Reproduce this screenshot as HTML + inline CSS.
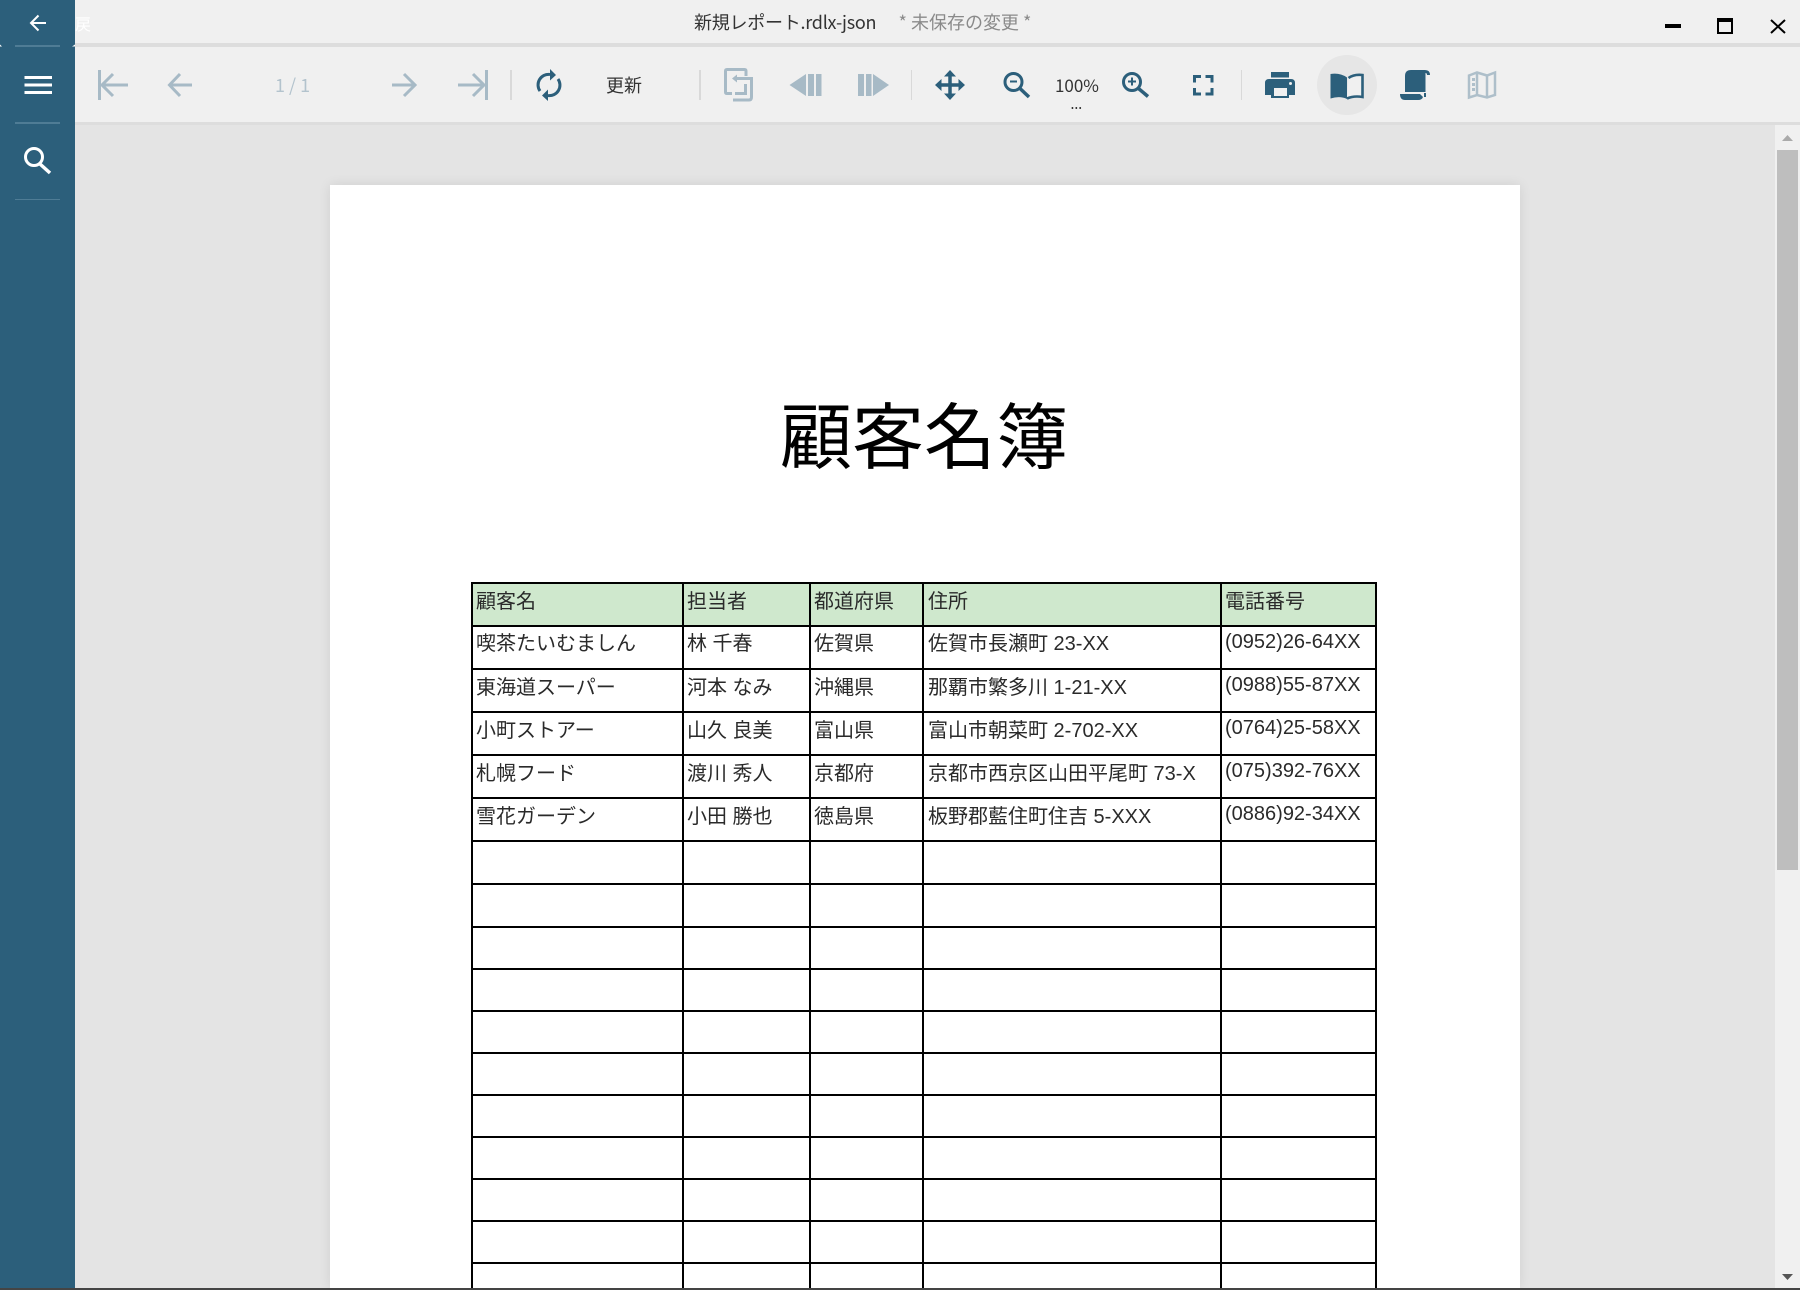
<!DOCTYPE html>
<html lang="ja">
<head>
<meta charset="utf-8">
<title>新規レポート.rdlx-json</title>
<style>
html,body{margin:0;padding:0;width:1800px;height:1290px;overflow:hidden;background:#e4e4e4}
body{position:relative;font-family:"Liberation Sans","Noto Sans CJK JP",sans-serif}
.b{position:absolute}
.t{position:absolute;white-space:nowrap;font-size:20px;line-height:24px;color:#2a2a2a}
.n{font-family:"Noto Sans CJK JP","Liberation Sans",sans-serif}
svg{position:absolute;left:0;top:0}
</style>
</head>
<body>
<div class="b" style="left:0;top:0;width:1800px;height:43px;background:#f0f0f0"></div>
<div class="b" style="left:0;top:43px;width:1800px;height:4px;background:#dddddd"></div>
<div class="b" style="left:0;top:47px;width:1800px;height:75px;background:#f0f0f0"></div>
<div class="b" style="left:0;top:122px;width:1800px;height:3px;background:#dddddd"></div>
<div class="b" style="left:1775px;top:125px;width:25px;height:1163px;background:#f0f0f0"></div>
<div class="b" style="left:1777px;top:150px;width:21px;height:720px;background:#bebebe"></div>
<div class="b" style="left:330px;top:185px;width:1190px;height:1103px;background:#fff;box-shadow:0 0 12px rgba(0,0,0,.09)"></div>

<div class="t n" style="left:75px;top:11px;font-size:16px;color:#fff">戻</div>
<div class="b" style="left:0;top:0;width:75px;height:1288px;background:#2c5f7b"></div>
<div class="b" style="left:0;top:1288px;width:1800px;height:2px;background:#444"></div>

<div class="t n" style="left:694px;top:10px;font-size:18px;letter-spacing:-.25px;color:#333">新規レポート.rdlx-json</div>
<div class="t n" style="left:898.500px;top:10px;font-size:18px;color:#8a8a8a">* 未保存の変更 *</div>
<div class="t n" style="left:275px;top:73px;font-size:18px;color:#b3c3cd">1 / 1</div>
<div class="t n" style="left:606px;top:73px;font-size:18px;color:#333">更新</div>
<div class="t n" style="left:1055px;top:73px;font-size:17px;color:#333">100%</div>
<div class="t n" style="left:1070.500px;top:92px;font-size:14px;color:#222">...</div>

<svg width="1800" height="1290" viewBox="0 0 1800 1290" fill="none">
  <!-- sidebar -->
  <g fill="#4f7c95">
    <rect x="15" y="45" width="45" height="2"/>
    <rect x="15" y="122" width="45" height="2"/>
    <rect x="15" y="199" width="45" height="1"/>
  </g>
  <path d="M0 46.500h2L0 44.500zM75 46.500h-3L75 44.500z" fill="#fff"/>
  <path d="M46 23H32M38.500 15.500L31 23L38.500 30.500" stroke="#fff" stroke-width="2"/>
  <g fill="#fff">
    <rect x="24.500" y="76" width="27.500" height="3"/>
    <rect x="24.500" y="83.500" width="27.500" height="3"/>
    <rect x="24.500" y="91" width="27.500" height="3"/>
  </g>
  <circle cx="34" cy="157" r="8.500" stroke="#fff" stroke-width="3"/>
  <path d="M40 164L50 173" stroke="#fff" stroke-width="3.500"/>

  <!-- nav, disabled -->
  <g stroke="#a7bac6" stroke-width="3">
    <path d="M128 85H103M113 74L102 85L113 96"/>
    <path d="M192 85H171M180 74L169.500 85L180 96"/>
    <path d="M392 85H413M404 74L415 85L404 96"/>
    <path d="M458 85H483M473 74L484 85L473 96"/>
  </g>
  <rect x="98" y="70" width="3" height="30" fill="#a7bac6"/>
  <rect x="485" y="70" width="3" height="30" fill="#a7bac6"/>

  <!-- separators -->
  <g fill="#d9d9d9">
    <rect x="510" y="70" width="2" height="30"/>
    <rect x="699" y="70" width="2" height="30"/>
    <rect x="911" y="70" width="1" height="30"/>
    <rect x="1241" y="70" width="1" height="30"/>
  </g>

  <!-- refresh -->
  <path d="M540 91A10.500 10.500 0 0 1 550 74.500M558 79A10.500 10.500 0 0 1 548 95.500" stroke="#2c5f7b" stroke-width="3"/>
  <path d="M550 69L556 75L550 80.500ZM548 89.500L542 95.500L548 101Z" fill="#2c5f7b"/>

  <!-- copy-ish -->
  <g stroke="#a7bac6" stroke-width="3">
    <path d="M746 76V71Q746 69.500 744.500 69.500H727Q725.500 69.500 725.500 71V92Q725.500 93.500 727 93.500H732"/>
    <path d="M736 78.500H751.500V97Q751.500 100 749 100H733"/>
    <path d="M735 93.500H745.500V84"/>
  </g>
  <path d="M732 78.500L737 74.500V82.500Z" fill="#a7bac6"/>

  <!-- prev/next section -->
  <g fill="#a7bac6">
    <path d="M789.500 85L806 74V96Z"/>
    <rect x="808" y="74" width="6" height="22"/>
    <rect x="816" y="74" width="5.500" height="22"/>
    <rect x="858" y="74" width="6" height="22"/>
    <rect x="866" y="74" width="5.500" height="22"/>
    <path d="M889 85L873 74V96Z"/>
  </g>

  <!-- move -->
  <path d="M950 75V95M940 85H960" stroke="#2c5f7b" stroke-width="3.500"/>
  <path d="M950 70L956 76.500H944ZM950 100L956 93.500H944ZM935 85L941.500 79V91ZM965 85L958.500 79V91Z" fill="#2c5f7b"/>

  <!-- zoom out / in -->
  <g stroke="#2c5f7b">
    <circle cx="1013.500" cy="82" r="8.500" stroke-width="3"/>
    <path d="M1020 88.500L1029 97" stroke-width="3.500"/>
    <path d="M1010 81.500H1017" stroke-width="2"/>
    <circle cx="1132" cy="82" r="8.500" stroke-width="3"/>
    <path d="M1138.500 88.500L1148 96.500" stroke-width="3.500"/>
    <path d="M1128 81.500H1136M1132 77.500V85.500" stroke-width="2"/>
  </g>

  <!-- fit -->
  <path d="M1194.500 82.500V76.500H1201M1205.500 76.500H1212V82.500M1212 88V94H1205.500M1201 94H1194.500V88" stroke="#2c5f7b" stroke-width="3"/>

  <!-- print -->
  <rect x="1271" y="72" width="18" height="5.500" fill="#2c5f7b"/>
  <path d="M1269 79H1291Q1295 79 1295 83V95H1289V98H1271V95H1265V83Q1265 79 1269 79Z" fill="#2c5f7b"/>
  <rect x="1274" y="88" width="13" height="8" fill="#f0f0f0"/>
  <circle cx="1290.500" cy="83.500" r="1.500" fill="#f0f0f0"/>

  <!-- book, active -->
  <circle cx="1347" cy="85" r="30" fill="#e6e6e6"/>
  <path d="M1347 77.500Q1340 72.500 1330.500 74V98.500Q1340 95.500 1347 99Z" fill="#2c5f7b"/>
  <path d="M1348.500 78Q1354 74 1362.500 75V97Q1354 95.500 1347 98.500" stroke="#2c5f7b" stroke-width="2.600" fill="#f0f0f0"/>

  <!-- scroll -->
  <path d="M1405 92V76Q1405 70 1411 70H1425Q1430 70 1430 75H1427Q1427 73 1425.500 73V92Z" fill="#2c5f7b"/>
  <path d="M1400 94H1420L1423 97Q1422 100 1418 100H1405Q1400 100 1400 94Z" fill="#2c5f7b"/>
  <rect x="1424" y="93" width="2" height="4" fill="#2c5f7b"/>

  <!-- map, disabled -->
  <path d="M1469 75.500L1477 72.500L1487 75.500L1495 72.500V95L1487 97.500L1477 95L1469 97.500Z" stroke="#aebfca" stroke-width="2.500"/>
  <path d="M1477 73V95M1487 75V97" stroke="#aebfca" stroke-width="2.500"/>
  <path d="M1472 78h3v3h-3zM1472 83h3v3h-3zM1472 88h3v3h-3z" fill="#aebfca"/>

  <!-- window controls -->
  <rect x="1665" y="24" width="16" height="4" fill="#000"/>
  <rect x="1718" y="19.500" width="14" height="13.500" stroke="#000" stroke-width="2"/>
  <rect x="1717" y="18" width="16" height="4" fill="#000"/>
  <path d="M1771 20L1785 33M1785 20L1771 33" stroke="#000" stroke-width="2"/>

  <!-- scrollbar arrows -->
  <path d="M1782 141L1787.500 135L1793 141Z" fill="#aaa"/>
  <path d="M1782 1274H1793L1787.500 1280Z" fill="#555"/>

  <!-- table -->
  <rect x="472" y="583" width="904" height="42" fill="#cfe8cd"/>
  <g fill="#000" shape-rendering="crispEdges">
    <rect x="471" y="582" width="906" height="2"/>
    <rect x="471" y="625" width="906" height="2"/>
    <rect x="471" y="668" width="906" height="2"/>
    <rect x="471" y="711" width="906" height="2"/>
    <rect x="471" y="754" width="906" height="2"/>
    <rect x="471" y="797" width="906" height="2"/>
    <rect x="471" y="840" width="906" height="2"/>
    <rect x="471" y="883" width="906" height="2"/>
    <rect x="471" y="926" width="906" height="2"/>
    <rect x="471" y="968" width="906" height="2"/>
    <rect x="471" y="1010" width="906" height="2"/>
    <rect x="471" y="1052" width="906" height="2"/>
    <rect x="471" y="1094" width="906" height="2"/>
    <rect x="471" y="1136" width="906" height="2"/>
    <rect x="471" y="1178" width="906" height="2"/>
    <rect x="471" y="1220" width="906" height="2"/>
    <rect x="471" y="1262" width="906" height="2"/>
    <rect x="471" y="582" width="2" height="706"/>
    <rect x="682" y="582" width="2" height="706"/>
    <rect x="809" y="582" width="2" height="706"/>
    <rect x="922" y="582" width="2" height="706"/>
    <rect x="1220" y="582" width="2" height="706"/>
    <rect x="1375" y="582" width="2" height="706"/>
  </g>
</svg>

<div class="t" style="left:780px;top:389px;font-size:72px;line-height:100px;color:#000">顧客名簿</div>

<div class="t" style="left:476px;top:590px">顧客名</div>
<div class="t" style="left:687px;top:590px">担当者</div>
<div class="t" style="left:814px;top:590px">都道府県</div>
<div class="t" style="left:928px;top:590px">住所</div>
<div class="t" style="left:1225px;top:590px">電話番号</div>

<div class="t" style="left:476px;top:632px">喫茶たいむましん</div>
<div class="t" style="left:687px;top:632px">林 千春</div>
<div class="t" style="left:814px;top:632px">佐賀県</div>
<div class="t" style="left:928px;top:632px">佐賀市長瀬町 23-XX</div>
<div class="t" style="left:1225px;top:630px">(0952)26-64XX</div>

<div class="t" style="left:476px;top:676px">東海道スーパー</div>
<div class="t" style="left:687px;top:676px">河本 なみ</div>
<div class="t" style="left:814px;top:676px">沖縄県</div>
<div class="t" style="left:928px;top:676px">那覇市繁多川 1-21-XX</div>
<div class="t" style="left:1225px;top:673px">(0988)55-87XX</div>

<div class="t" style="left:476px;top:719px">小町ストアー</div>
<div class="t" style="left:687px;top:719px">山久 良美</div>
<div class="t" style="left:814px;top:719px">富山県</div>
<div class="t" style="left:928px;top:719px">富山市朝菜町 2-702-XX</div>
<div class="t" style="left:1225px;top:716px">(0764)25-58XX</div>

<div class="t" style="left:476px;top:762px">札幌フード</div>
<div class="t" style="left:687px;top:762px">渡川 秀人</div>
<div class="t" style="left:814px;top:762px">京都府</div>
<div class="t" style="left:928px;top:762px">京都市西京区山田平尾町 73-X</div>
<div class="t" style="left:1225px;top:759px">(075)392-76XX</div>

<div class="t" style="left:476px;top:805px">雪花ガーデン</div>
<div class="t" style="left:687px;top:805px">小田 勝也</div>
<div class="t" style="left:814px;top:805px">徳島県</div>
<div class="t" style="left:928px;top:805px">板野郡藍住町住吉 5-XXX</div>
<div class="t" style="left:1225px;top:802px">(0886)92-34XX</div>
</body>
</html>
